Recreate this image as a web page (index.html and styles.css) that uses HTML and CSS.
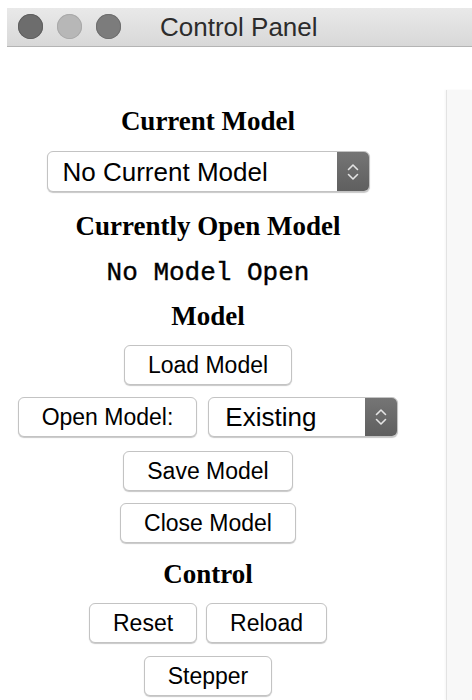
FILE: index.html
```html
<!DOCTYPE html>
<html lang="en">
<head>
<meta charset="utf-8">
<title>Control Panel</title>
<link rel="stylesheet" href="styles.css">
</head>
<body>
<div class="window">
  <header class="titlebar">
    <div class="lights">
      <span class="light light-close"></span>
      <span class="light light-min"></span>
      <span class="light light-max"></span>
    </div>
    <h1 class="title">Control Panel</h1>
  </header>

  <div class="content">
    <main class="controls">
      <h2 class="heading heading-first">Current Model</h2>
      <div class="select select-wide">
        <span class="select-label">No Current Model</span>
        <span class="select-arrow">
          <svg width="12" height="18" viewBox="0 0 12 18"><path d="M1.5 6.5 L6 2 L10.5 6.5 M1.5 11.5 L6 16 L10.5 11.5" fill="none" stroke="#e4e4e4" stroke-width="1.6" stroke-linecap="round" stroke-linejoin="round"/></svg>
        </span>
      </div>

      <h2 class="heading heading-open">Currently Open Model</h2>
      <p class="status">No Model Open</p>

      <h2 class="heading heading-model">Model</h2>
      <button class="btn btn-load">Load Model</button>
      <div class="row row-open">
        <button class="btn">Open Model:</button>
        <div class="select select-narrow">
          <span class="select-label">Existing</span>
          <span class="select-arrow">
            <svg width="12" height="18" viewBox="0 0 12 18"><path d="M1.5 6.5 L6 2 L10.5 6.5 M1.5 11.5 L6 16 L10.5 11.5" fill="none" stroke="#e4e4e4" stroke-width="1.6" stroke-linecap="round" stroke-linejoin="round"/></svg>
          </span>
        </div>
      </div>
      <button class="btn btn-save">Save Model</button>
      <button class="btn btn-close">Close Model</button>

      <h2 class="heading heading-control">Control</h2>
      <div class="row row-control">
        <button class="btn">Reset</button>
        <button class="btn">Reload</button>
      </div>
      <button class="btn btn-stepper">Stepper</button>
    </main>
    <aside class="sidebar"></aside>
  </div>
</div>
</body>
</html>
```

FILE: styles.css
```css
html, body {
  margin: 0;
  padding: 0;
  background: #ffffff;
}

body {
  width: 472px;
  height: 700px;
  overflow: hidden;
  font-family: "Liberation Sans", Arial, sans-serif;
  color: #000;
}

.window {
  display: flex;
  flex-direction: column;
  height: 700px;
}

/* Title bar with the three window buttons */
.titlebar {
  margin: 8px 0 0 7px;
  height: 38px;
  display: flex;
  align-items: center;
  background: linear-gradient(#e9e9e9, #d8d8d8);
  border-bottom: 1px solid #b4b4b4;
}

.lights {
  display: flex;
  gap: 14px;
  margin-left: 11px;
}

.light {
  width: 25px;
  height: 25px;
  border-radius: 50%;
  margin-top: -1px;
}

.light-close { background: #6d6d6d; box-shadow: inset 0 0 0 1px #5f5f5f; }
.light-min   { background: #b7b7b7; box-shadow: inset 0 0 0 1px #a9a9a9; }
.light-max   { background: #7c7c7c; box-shadow: inset 0 0 0 1px #6e6e6e; }

.title {
  margin: 0 0 0 39px;
  font: 26px/1 "Liberation Sans", Arial, sans-serif;
  color: #2c2c2c;
}

/* Main area: controls column and the side panel */
.content {
  flex: 1;
  display: flex;
}

.controls {
  width: 416px;
  display: flex;
  flex-direction: column;
  align-items: center;
}

.sidebar {
  margin-left: auto;
  margin-top: 43px;
  width: 25px;
  background: #f8f8f8;
  border-left: 1px solid #e3e3e3;
  box-shadow: -1px 0 2px rgba(0, 0, 0, 0.04);
}

.heading {
  margin: 0;
  font: bold 27px/30px "Liberation Serif", "Times New Roman", serif;
  color: #000;
}

.heading-first   { margin-top: 59px; }
.heading-open    { margin-top: 19px; }
.heading-model   { margin-top: 13px; }
.heading-control { margin-top: 16px; }

.status {
  margin: 17px 0 0;
  font: 26px/30px "Liberation Mono", "Courier New", monospace;
  color: #000;
  -webkit-text-stroke: 0.4px #000;
}

/* Push buttons */
.btn {
  box-sizing: border-box;
  height: 40px;
  padding: 0 23px;
  background: #fff;
  border: 1px solid #c3c3c3;
  border-radius: 6px;
  box-shadow: 0 1px 1px rgba(0, 0, 0, 0.22);
  font: 23px/1 "Liberation Sans", Arial, sans-serif;
  color: #000;
}

.btn-load    { margin-top: 14px; }
.btn-save    { margin-top: 14px; }
.btn-close   { margin-top: 12px; }
.btn-stepper { margin-top: 13px; }

.row {
  display: flex;
}

.row-open    { margin-top: 12px; gap: 11px; }
.row-control { margin-top: 14px; gap: 9px; }

/* Pop-up menus */
.select {
  box-sizing: border-box;
  display: flex;
  background: #fff;
  border: 1px solid #c3c3c3;
  border-radius: 6px;
  box-shadow: 0 1px 1px rgba(0, 0, 0, 0.22);
  overflow: hidden;
}

.select-wide {
  width: 323px;
  height: 41px;
  margin-top: 15px;
}

.select-narrow {
  width: 190px;
  height: 40px;
}

.select-label {
  flex: 1;
  display: flex;
  align-items: center;
  padding-left: 15px;
  font: 26px/1 "Liberation Sans", Arial, sans-serif;
  color: #000;
}

.select-narrow .select-label {
  padding-left: 16px;
}

.select-arrow {
  width: 32px;
  display: flex;
  align-items: center;
  justify-content: center;
  background: linear-gradient(#757575, #5f5f5f);
}
```
